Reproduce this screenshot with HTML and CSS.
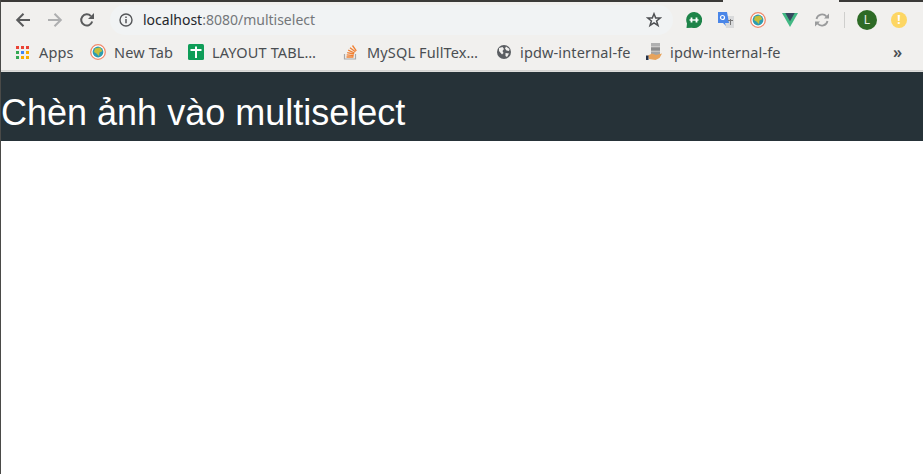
FILE: index.html
```html
<!DOCTYPE html>
<html lang="en">

<head>
    <meta charset="UTF-8">
    <meta name="viewport" content="width=device-width, initial-scale=1.0">
    <title>multiselect</title>
    <link rel="stylesheet" href="styles.css">
</head>

<body>
    <div class="browser">
        <div class="top-edge"><span class="top-notch"></span></div>

        <div class="toolbar">
            <svg class="nav-icon" viewBox="0 0 16 16"><path d="M15 8H2.500M8.500 1.700 2.200 8l6.300 6.300" fill="none" stroke="#5a5b5c" stroke-width="2"/></svg>
            <svg class="nav-icon" viewBox="0 0 16 16"><path d="M1 8h12.500M7.500 1.700 13.800 8l-6.300 6.300" fill="none" stroke="#aeafb0" stroke-width="2"/></svg>
            <svg class="nav-icon" viewBox="0 0 16 16"><path d="M13.200 9.500a5.600 5.600 0 1 1-1.300-5.400" fill="none" stroke="#5a5b5c" stroke-width="2"/><path d="M15 1v6H9z" fill="#5a5b5c"/></svg>

            <div class="omnibox">
                <svg class="info-icon" viewBox="0 0 14 14"><circle cx="7" cy="7" r="6" fill="none" stroke="#55575a" stroke-width="1.400"/><path d="M7 6v4.200M7 3.500v1.500" stroke="#55575a" stroke-width="1.500"/></svg>
                <span class="url"><span class="host">localhost</span>:8080/multiselect</span>
                <svg class="star-icon" viewBox="0 0 16 16"><path d="M8 1.800 9.700 6h4.600l-3.700 2.900 1.400 4.600L8 10.900l-4 2.600 1.400-4.600L1.700 6h4.600z" fill="none" stroke="#4f5154" stroke-width="1.500"/></svg>
            </div>

            <div class="extensions">
                <svg class="ext" viewBox="0 0 16 16"><path d="M8 0a8 8 0 1 1-2 15.700L0.500 16 1 11.500A8 8 0 0 1 8 0z" fill="#1e8449"/><path d="M3.500 8h9" stroke="#fff" stroke-width="1.400"/><path d="M5.500 5.500v5M10.500 5.500v5" stroke="#fff" stroke-width="1.800"/></svg>
                <svg class="ext tall" viewBox="0 0 16 16"><path d="M6 4h10v12H8z" fill="#d9dadb"/><path d="M0 0h9l2 11H7l1 3-3-3H0z" fill="#4a86e8"/><circle cx="4.500" cy="5.500" r="2" fill="none" stroke="#fff" stroke-width="1.200"/><path d="M10 8.500h5M12.500 7v6" stroke="#777" stroke-width="1"/></svg>
                <svg class="ext" viewBox="0 0 16 16"><circle cx="8" cy="8" r="7.300" fill="#fff" stroke="#f08a6c" stroke-width="1.300"/><circle cx="8" cy="8" r="5.400" fill="#2e9cb0"/><path d="M5 4.500 10 3.500 12.500 7 9.500 8.500 9 12 6.500 9.500 4 8z" fill="#c4bf3a"/></svg>
                <svg class="ext" viewBox="0 0 16 16"><path d="M0 1h16L8 15z" fill="#41b883"/><path d="M3.300 1h9.400L8 9.200z" fill="#35495e"/></svg>
                <svg class="ext" viewBox="0 0 16 16"><path d="M2.500 7a5.700 5.700 0 0 1 10-2.500M13.500 9a5.700 5.700 0 0 1-10 2.500" fill="none" stroke="#9a9b9c" stroke-width="1.800"/><path d="M15 1.500v5h-5zM1 14.500v-5h5z" fill="#9a9b9c"/></svg>
            </div>

            <span class="divider"></span>
            <span class="avatar">L</span>
            <span class="alert">!</span>
        </div>

        <div class="bookmarks">
            <a class="bookmark bm-apps">
                <span class="apps-grid">
                    <i class="red"></i><i class="red"></i><i class="red"></i>
                    <i class="green"></i><i class="blue"></i><i class="yellow"></i>
                    <i class="green"></i><i class="yellow"></i><i class="yellow"></i>
                </span>
                <span>Apps</span>
            </a>
            <a class="bookmark bm-newtab">
                <svg class="bm-icon" viewBox="0 0 16 16"><circle cx="8" cy="8" r="7.300" fill="#fff" stroke="#f08a6c" stroke-width="1.300"/><circle cx="8" cy="8" r="5.400" fill="#2e9cb0"/><path d="M5 4.500 10 3.500 12.500 7 9.500 8.500 9 12 6.500 9.500 4 8z" fill="#c4bf3a"/></svg>
                <span>New Tab</span>
            </a>
            <a class="bookmark bm-layout">
                <svg class="bm-icon" viewBox="0 0 16 16"><rect width="16" height="16" rx="1.500" fill="#0f9d58"/><path d="M2.500 6h11M8 2.500V14" stroke="#fff" stroke-width="2"/></svg>
                <span>LAYOUT TABL…</span>
            </a>
            <a class="bookmark bm-mysql">
                <svg class="bm-icon" viewBox="0 0 16 16"><path d="M1.500 10v5h11v-5" fill="none" stroke="#a8a8a8" stroke-width="1.200"/><path d="M3.500 13h7M3.700 10.800l7 .8M4.200 8.600l6.800 1.400M5.200 6.200l6.300 2.800M7 3.800l5.400 4M9.500 1.500l3.800 5.300" stroke="#f08033" stroke-width="1.300"/></svg>
                <span>MySQL FullTex…</span>
            </a>
            <a class="bookmark bm-globe">
                <svg class="bm-icon globe" viewBox="0 0 14 14"><circle cx="7" cy="7" r="7" fill="#5b5e62"/><path d="M2 3 5.500 2 7 4 5.500 6 6.500 8 5 9.500 2 6zM9 1.500 12.500 4 12 6 9.500 5.500 8 3.500zM8.500 8 12 8.500 10 12 8.500 11z" fill="#f1f0ee"/></svg>
                <span>ipdw-internal-fe</span>
            </a>
            <a class="bookmark bm-server">
                <svg class="bm-icon server" viewBox="0 0 16 18"><rect x="5" y="0" width="9" height="3.600" fill="#b0b0b0"/><rect x="5" y="4.200" width="9" height="3.600" fill="#8c8c8c"/><rect x="5" y="8.400" width="9" height="3.600" fill="#a4a4a4"/><path d="M2 12.500 6 10.500l4 1.500 6-1.500-2.500 4.500-4 2-6.500-1z" fill="#e7a35c"/><rect x="0" y="12.500" width="2.500" height="4.500" fill="#24324a"/></svg>
                <span>ipdw-internal-fe</span>
            </a>
            <span class="more">»</span>
        </div>

        <div class="chrome-line"></div>

        <div class="page">
            <header class="page-header">
                <h1>Chèn ảnh vào multiselect</h1>
            </header>
        </div>
    </div>
</body>

</html>
```

FILE: styles.css
```css
html,
body {
    margin: 0;
    height: 100%;
    overflow: hidden;
}

.browser {
    display: flex;
    flex-direction: column;
    height: 474px;
    border-left: 1px solid #4a4a48;
    box-sizing: border-box;
    background: #f1f0ee;
    font-family: "Noto Sans", "Open Sans", sans-serif;
}

/* window edge above the toolbar */
.top-edge {
    height: 2px;
    background: #3b3a38;
    padding-left: 722px;
    flex: none;
}

.top-notch {
    display: block;
    width: 116px;
    height: 2px;
    background: #f1f0ee;
}

.toolbar {
    display: flex;
    align-items: center;
    height: 33px;
    padding: 2px 0 0 14px;
    box-sizing: border-box;
    flex: none;
}

.nav-icon {
    width: 16px;
    height: 16px;
    margin-right: 16px;
    flex: none;
}

.omnibox {
    display: flex;
    align-items: center;
    width: 563px;
    height: 30px;
    margin: 0 13px 0 -1px;
    padding: 0 10px 0 9px;
    box-sizing: border-box;
    border-radius: 15px;
    background: #f1f3f4;
}

.info-icon {
    width: 14px;
    height: 14px;
    margin-right: 10px;
}

.url {
    flex: 1;
    font-size: 14px;
    color: #74777a;
}

.host {
    color: #24272b;
}

.star-icon {
    width: 16px;
    height: 16px;
    margin-right: 1px;
}

.extensions {
    display: flex;
    align-items: center;
    gap: 16px;
}

.ext {
    width: 16px;
    height: 16px;
    flex: none;
}

.ext.tall {
    height: 18px;
}

.divider {
    width: 1px;
    height: 16px;
    margin: 0 12px 0 14px;
    background: #cfcfcd;
}

.avatar {
    width: 20px;
    height: 20px;
    border-radius: 50%;
    background: #2e6b26;
    color: #e8efe6;
    font-size: 12px;
    line-height: 20px;
    text-align: center;
}

.alert {
    width: 16px;
    height: 16px;
    margin-left: 14px;
    border-radius: 50%;
    background: #fdd663;
    color: #fff;
    font-size: 12px;
    font-weight: 700;
    line-height: 16px;
    text-align: center;
}

.bookmarks {
    display: flex;
    align-items: center;
    height: 34px;
    padding-left: 15px;
    color: #4a4e52;
    font-size: 14.5px;
    letter-spacing: 0.14px;
    flex: none;
}

.bookmark {
    display: flex;
    align-items: center;
    white-space: nowrap;
}

.bm-apps { width: 74px; }
.bm-newtab { width: 98px; }
.bm-layout { width: 155px; }
.bm-mysql { width: 154px; }
.bm-globe { width: 149px; }
.bm-server { width: 247px; }

.bm-icon {
    width: 16px;
    height: 16px;
    margin-right: 8px;
    flex: none;
}

.bm-icon.globe {
    width: 14px;
    height: 14px;
    margin-right: 9px;
}

.bm-icon.server {
    height: 18px;
}

.apps-grid {
    display: grid;
    grid-template-columns: repeat(3, 3px);
    gap: 2px;
    margin-right: 10px;
}

.apps-grid i {
    height: 3px;
}

.red { background: #ea4335; }
.green { background: #34a853; }
.blue { background: #4285f4; }
.yellow { background: #f9ab00; }

.more {
    font-size: 16px;
    font-weight: 600;
    line-height: 16px;
}

.chrome-line {
    height: 3px;
    background: linear-gradient(#f1f0ee 0, #f1f0ee 1px, #cfcfcd 1px, #e2e2e0 3px);
    flex: none;
}

.page {
    flex: 1;
    background: #fff;
}

.page-header {
    height: 69px;
    background: #263238;
    overflow: hidden;
}

.page-header h1 {
    margin: 20px 0 0;
    color: #fff;
    font-family: "Liberation Sans", Arial, sans-serif;
    font-size: 36px;
    font-weight: 400;
    line-height: 41px;
}
```
